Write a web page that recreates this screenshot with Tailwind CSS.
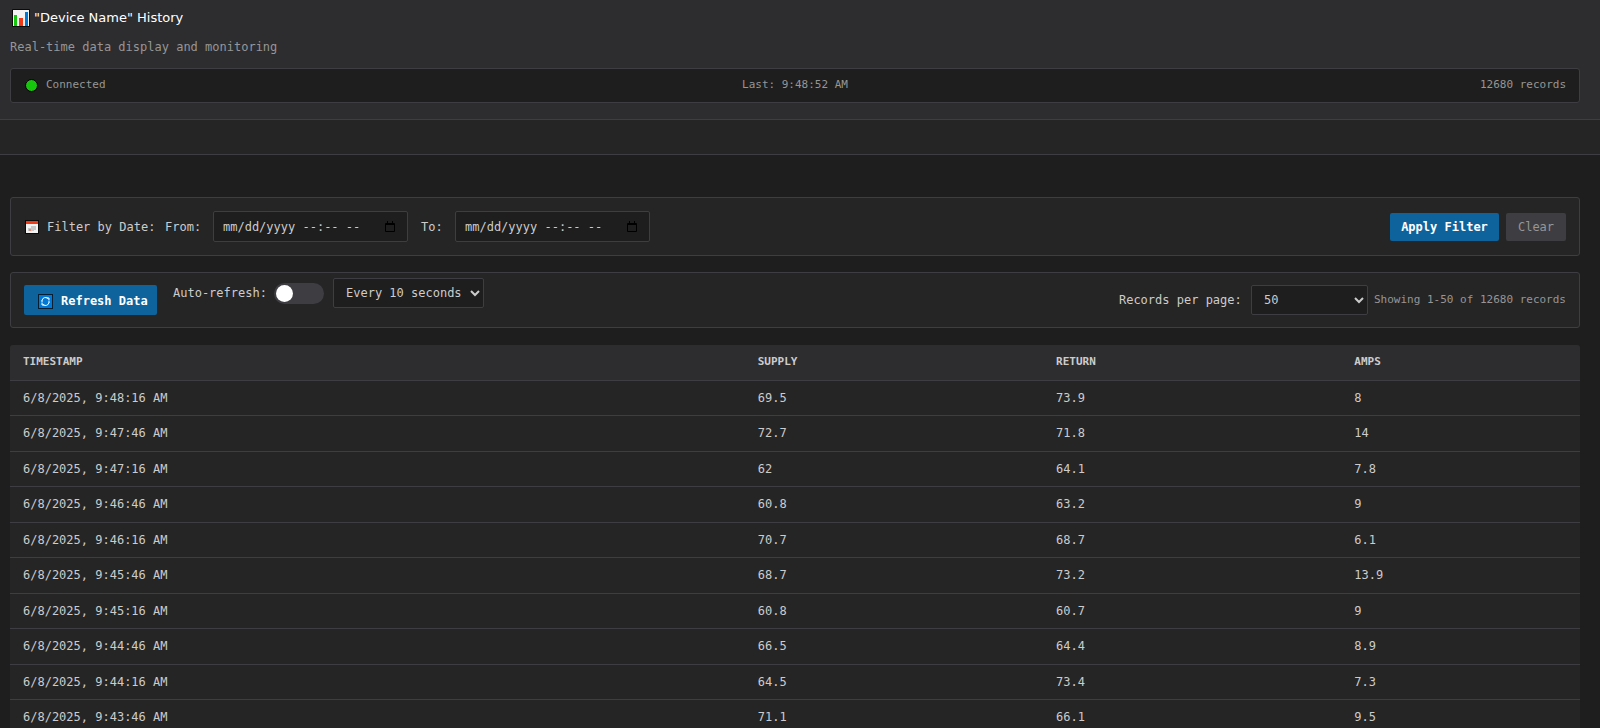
<!DOCTYPE html>
<html lang="en">
<head>
<meta charset="utf-8">
<meta name="viewport" content="width=device-width, initial-scale=1">
<title>Device History</title>
<script src="https://cdn.jsdelivr.net/npm/@tailwindcss/browser@4"></script>
</head>
<body class="min-h-screen overflow-x-hidden bg-[#1e1e1e] font-['DejaVu_Sans_Mono',monospace] text-xs text-[#cccccc]">
<header class="border-b border-[#3e3e42] bg-[#2d2d30] pt-2 pr-5 pb-4 pl-[10px]">
  <h1 class="flex h-5 items-center gap-1 font-['DejaVu_Sans',sans-serif] text-[13px] text-white">
    <svg class="ml-[2px] size-[18px]" viewBox="0 0 18 18" aria-hidden="true"><rect width="18" height="18" rx="1" fill="#0a0a0a"/><rect x="1" y="1" width="16" height="16" fill="#f3f3f3"/><rect x="2" y="6" width="3" height="11" fill="#16c60c"/><rect x="7" y="9" width="4" height="8" fill="#f03a17"/><rect x="13" y="3" width="3" height="14" fill="#0078d7"/></svg>
    <span>"Device Name" History</span>
  </h1>
  <p class="mt-2 h-5 pt-px leading-5 text-[#969696]">Real-time data display and monitoring</p>
  <div class="mt-3 grid h-[35px] grid-cols-3 items-center rounded-[3px] border border-[#3e3e42] bg-[#1e1e1e] px-[13px] text-[11px] text-[#969696]">
    <div class="flex items-center gap-2"><span class="ml-px size-[13px] rounded-full border border-black bg-[#16c60c]"></span><span>Connected</span></div>
    <div class="text-center">Last: 9:48:52 AM</div>
    <div class="text-right">12680 records</div>
  </div>
</header>
<div class="h-[35px] border-b border-[#3e3e42] bg-[#252526]"></div>
<main class="flex flex-col gap-4 pt-[42px] pr-5 pl-[10px]">
  <form class="flex h-[59px] items-center rounded-[3px] border border-[#3e3e42] bg-[#252526] px-[13px]">
    <svg class="ml-px size-[14px] shrink-0" viewBox="0 0 14 14" aria-hidden="true"><rect width="14" height="14" fill="#0a0a0a"/><rect x="1" y="1" width="12" height="12" fill="#f3f3f3"/><rect x="1" y="1" width="12" height="3" fill="#f03a17"/><path d="M6 6h5v4H9v1H3V8h3z" fill="#c8c8c8"/><rect x="4" y="9" width="2" height="2" fill="#f08a70"/></svg>
    <span class="w-[126px] pl-2">Filter by Date:</span>
    <label for="from" class="w-12">From:</label>
    <div class="flex h-[31px] w-[195px] items-center rounded-xs border border-[#3e3e42] bg-[#1e1e1e] pr-3 pl-[9px]">
      <input id="from" type="text" placeholder="mm/dd/yyyy --:-- --" class="min-w-0 flex-1 bg-transparent outline-none placeholder:text-[#cccccc]">
      <button type="button" aria-label="Pick start date"><svg class="block h-3 w-[10px]" viewBox="0 0 10 12" fill="none" stroke="#000" aria-hidden="true"><path d="M.5 2.5h9v8h-9zM.5 3.5h9M2.5 0v2M7.5 0v2"/></svg></button>
    </div>
    <label for="to" class="w-[47px] pl-[13px]">To:</label>
    <div class="flex h-[31px] w-[195px] items-center rounded-xs border border-[#3e3e42] bg-[#1e1e1e] pr-3 pl-[9px]">
      <input id="to" type="text" placeholder="mm/dd/yyyy --:-- --" class="min-w-0 flex-1 bg-transparent outline-none placeholder:text-[#cccccc]">
      <button type="button" aria-label="Pick end date"><svg class="block h-3 w-[10px]" viewBox="0 0 10 12" fill="none" stroke="#000" aria-hidden="true"><path d="M.5 2.5h9v8h-9zM.5 3.5h9M2.5 0v2M7.5 0v2"/></svg></button>
    </div>
    <div class="ml-auto flex gap-[7px]">
      <button type="button" class="h-7 w-[109px] rounded-xs bg-[#0e639c] font-bold text-white">Apply Filter</button>
      <button type="button" class="h-7 w-[60px] rounded-xs bg-[#3e3e42] text-[#969696]">Clear</button>
    </div>
  </form>
  <section class="flex h-14 items-start rounded-[3px] border border-[#3e3e42] bg-[#252526] px-[13px] pt-[5px]">
    <button type="button" class="mt-[7px] flex h-[30px] w-[133px] items-center gap-2 rounded-xs bg-[#0e639c] pt-[2px] pl-[14px] font-bold text-white">
      <svg class="size-[15px]" viewBox="0 0 15 15" aria-hidden="true"><rect width="15" height="15" fill="#061e30"/><rect x="1" y="1" width="13" height="13" fill="#0078d7"/><path d="M4 6.5a3.6 3.6 0 0 1 6.5-1.5M11 8.500a3.600 3.600 0 0 1-6.500 1.500M4 8.500V6M11 6.500V9M8.500 4h2.500v2M6.500 11H4V9" fill="none" stroke="#fff"/></svg>
      <span>Refresh Data</span>
    </button>
    <div class="ml-4 flex h-[30px] items-center">
      <label for="auto" class="w-[101px]">Auto-refresh:</label>
      <input id="auto" type="checkbox" class="h-[21px] w-[50px] appearance-none rounded-full bg-[#3e3e42] p-[2px] before:block before:size-[17px] before:rounded-full before:bg-white checked:bg-[#0e639c]">
      <select aria-label="Refresh interval" class="ml-[9px] h-[30px] w-[151px] rounded-xs border border-[#3e3e42] bg-[#1e1e1e] pl-2"><option>Every 10 seconds</option></select>
    </div>
    <div class="mt-[7px] ml-auto flex h-[30px] items-center">
      <label for="size" class="w-[132px]">Records per page:</label>
      <select id="size" class="h-[30px] w-[117px] rounded-xs border border-[#3e3e42] bg-[#1e1e1e] pl-2"><option>50</option></select>
      <span class="ml-[6px] text-[11px] text-[#969696]">Showing 1-50 of 12680 records</span>
    </div>
  </section>
  <table class="mt-px w-full table-fixed overflow-hidden rounded-[3px] bg-[#252526] text-left">
    <colgroup><col class="w-[46.8%]"><col class="w-[19%]"><col class="w-[19%]"><col></colgroup>
    <thead class="bg-[#2d2d30] text-[11px]"><tr class="h-[35px] border-b border-[#3e3e42] *:px-[13px] *:font-bold"><th>TIMESTAMP</th><th>SUPPLY</th><th>RETURN</th><th>AMPS</th></tr></thead>
    <tbody class="[&>tr]:border-b [&>tr]:border-[#3e3e42] [&>tr:nth-child(odd)]:h-[35px] [&>tr:nth-child(even)]:h-9 [&_td]:px-[13px]">
      <tr><td>6/8/2025, 9:48:16 AM</td><td>69.5</td><td>73.9</td><td>8</td></tr>
      <tr><td>6/8/2025, 9:47:46 AM</td><td>72.7</td><td>71.8</td><td>14</td></tr>
      <tr><td>6/8/2025, 9:47:16 AM</td><td>62</td><td>64.1</td><td>7.8</td></tr>
      <tr><td>6/8/2025, 9:46:46 AM</td><td>60.8</td><td>63.2</td><td>9</td></tr>
      <tr><td>6/8/2025, 9:46:16 AM</td><td>70.7</td><td>68.7</td><td>6.1</td></tr>
      <tr><td>6/8/2025, 9:45:46 AM</td><td>68.7</td><td>73.2</td><td>13.9</td></tr>
      <tr><td>6/8/2025, 9:45:16 AM</td><td>60.8</td><td>60.7</td><td>9</td></tr>
      <tr><td>6/8/2025, 9:44:46 AM</td><td>66.5</td><td>64.4</td><td>8.9</td></tr>
      <tr><td>6/8/2025, 9:44:16 AM</td><td>64.5</td><td>73.4</td><td>7.3</td></tr>
      <tr><td>6/8/2025, 9:43:46 AM</td><td>71.1</td><td>66.1</td><td>9.5</td></tr>
    </tbody>
  </table>
</main>
</body>
</html>
